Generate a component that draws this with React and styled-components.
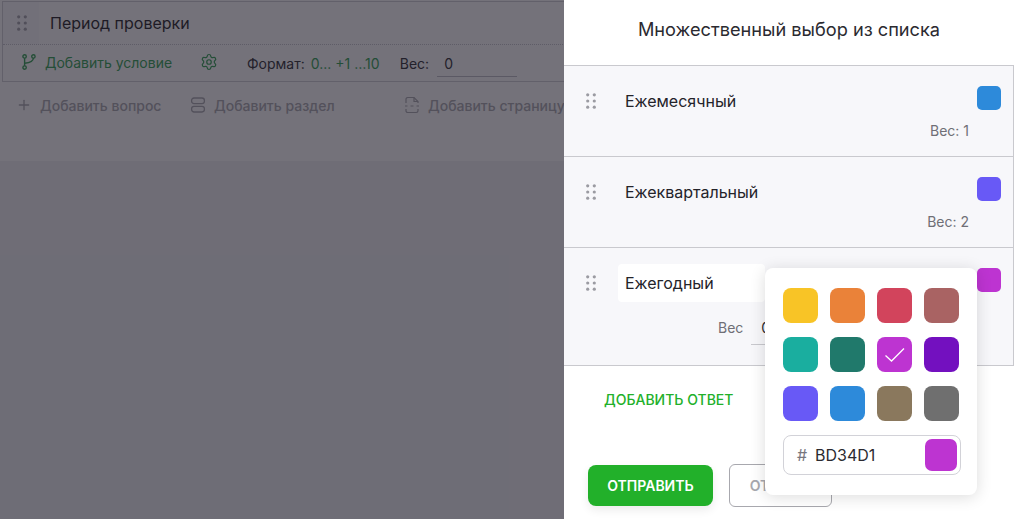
import styled, { createGlobalStyle } from "styled-components";
import { Plus, Settings } from "lucide-react";

const GlobalStyle = createGlobalStyle`
  html, body {
    margin: 0;
    height: 100%;
    overflow: hidden;
  }
  body {
    font-family: "Inter", "Liberation Sans", sans-serif;
    color: #2b2a30;
  }
`;

const answers = [
  { id: 1, title: "Ежемесячный", color: "#2d8ada", weight: 1 },
  { id: 2, title: "Ежеквартальный", color: "#6859f6", weight: 2 },
];

const palette = [
  "#f8c426",
  "#ea8239",
  "#d2445c",
  "#a96363",
  "#1aae9f",
  "#20796b",
  "#bd34d1",
  "#7310bf",
  "#6859f6",
  "#2d8ada",
  "#8a785d",
  "#6f6f6f",
];

const DragDots = () => (
  <svg width="10" height="16" viewBox="0 0 10 16" fill="currentColor">
    <circle cx="1.7" cy="1.8" r="1.6" />
    <circle cx="8.3" cy="1.8" r="1.6" />
    <circle cx="1.7" cy="8" r="1.6" />
    <circle cx="8.3" cy="8" r="1.6" />
    <circle cx="1.7" cy="14.2" r="1.6" />
    <circle cx="8.3" cy="14.2" r="1.6" />
  </svg>
);

const BranchIcon = () => (
  <svg width="14" height="16" viewBox="0 0 14 16" fill="none" stroke="currentColor" strokeWidth="1.4">
    <circle cx="2.6" cy="2.4" r="1.7" />
    <circle cx="2.6" cy="13.6" r="1.7" />
    <circle cx="11.4" cy="2.4" r="1.7" />
    <path d="M2.6 4.1v7.8" />
    <path d="M11.4 4.1c0 3.4-3.4 4.6-8.8 5.2" />
  </svg>
);

const SectionIcon = () => (
  <svg width="16" height="16" viewBox="0 0 16 16" fill="none" stroke="currentColor" strokeWidth="1.3">
    <rect x="1.6" y="1" width="12.8" height="5.6" rx="2.4" />
    <rect x="1.6" y="9.4" width="12.8" height="5.6" rx="2.4" />
  </svg>
);

const PageIcon = () => (
  <svg width="16" height="18" viewBox="0 0 16 18" fill="none" stroke="currentColor" strokeWidth="1.2">
    <path d="M2 7V3.2A1.7 1.7 0 0 1 3.7 1.5H10l4 4V7" />
    <path d="M10 1.5v4h4" />
    <path d="M1 10h2.5M6.5 10h3M12.5 10H15" />
    <path d="M2 13v1.8a1.7 1.7 0 0 0 1.7 1.7h8.6a1.7 1.7 0 0 0 1.7-1.7V13" />
  </svg>
);

const Page = styled.div`
  display: flex;
  width: 1014px;
  height: 519px;
  overflow: hidden;
  position: relative;
`;

const Backdrop = styled.div`
  position: absolute;
  inset: 0 450px 0 0;
  background: rgba(30, 28, 40, 0.62);
`;

const Editor = styled.section`
  width: 564px;
  flex: none;
  background: #f1f1f5;
  overflow: hidden;
`;

const EditorTop = styled.div`
  height: 161px;
  padding: 1px 0 0 2px;
  box-sizing: border-box;
  background: #ffffff;
`;

const QuestionCard = styled.div`
  width: 600px;
  border: 1px solid #cfcfd6;
  box-sizing: border-box;
`;

const QuestionHead = styled.div`
  display: flex;
  align-items: center;
  height: 42px;
  border-bottom: 1px dotted #c4c4cc;
`;

const Handle = styled.div`
  width: 36px;
  height: 100%;
  padding-left: 1px;
  box-sizing: border-box;
  display: flex;
  align-items: center;
  justify-content: center;
  background: #fafafc;
  color: #a3a3aa;
`;

const QuestionTitle = styled.div`
  margin-left: 11px;
  font-size: 16px;
  color: #1d1b22;
`;

const QuestionMeta = styled.div`
  display: flex;
  align-items: center;
  height: 36px;
  padding-left: 19px;
  font-size: 14px;
`;

const ConditionLink = styled.span`
  display: flex;
  align-items: center;
  gap: 9px;
  width: 178px;
  margin-bottom: 2px;
  color: #2ea050;
`;

const GearButton = styled.span`
  display: flex;
  width: 47px;
  margin-bottom: 2px;
  color: #2ea050;
`;

const MetaLabel = styled.span`
  color: #2b2a30;
`;

const FormatValue = styled.span`
  margin-left: 6px;
  width: 89px;
  color: #2ea050;
  white-space: pre;
`;

const MetaInput = styled.span`
  width: 73px;
  margin: 5px 0 0 8px;
  padding: 0 0 4px 7px;
  border-bottom: 1px solid #bdbdc5;
  color: #2b2a30;
`;

const AddBar = styled.div`
  display: flex;
  align-items: center;
  height: 24px;
  margin-top: 11px;
  padding-left: 14px;
  white-space: nowrap;
`;

const AddAction = styled.span`
  display: flex;
  flex: none;
  align-items: center;
  gap: 8px;
  width: ${(p) => p.$width}px;
  font-size: 14px;
  font-weight: 500;
  color: #a8a8ae;
`;

const Drawer = styled.aside`
  position: relative;
  width: 450px;
  flex: none;
  background: #ffffff;
`;

const DrawerTitle = styled.h2`
  margin: 0;
  height: 65px;
  padding-top: 18px;
  box-sizing: border-box;
  font-size: 18.2px;
  line-height: 22px;
  font-weight: 400;
  text-align: center;
  color: #2b2a30;
`;

const AnswerList = styled.div`
  border-top: 1px solid #c9c9ce;
  border-right: 1px solid #c9c9ce;
`;

const AnswerRow = styled.div`
  position: relative;
  height: ${(p) => p.$height}px;
  box-sizing: border-box;
  background: #f7f7fa;
  border-bottom: 1px solid #c9c9ce;
  padding: 20px 12px 0 22px;
`;

const AnswerMain = styled.div`
  display: flex;
  align-items: center;
  height: 30px;
`;

const RowHandle = styled.div`
  display: flex;
  width: 32px;
  color: #9b9ba2;
`;

const AnswerTitle = styled.div`
  flex: 1;
  font-size: 16px;
  padding-left: 7px;
  color: #24232a;
`;

const AnswerTitleInput = styled.div`
  flex: 1;
  height: 38px;
  line-height: 38px;
  margin-right: 212px;
  padding-left: 7px;
  border-radius: 4px;
  font-size: 16px;
  color: #24232a;
  background: #ffffff;
`;

const ColorChip = styled.div`
  align-self: flex-start;
  width: 24px;
  height: 24px;
  flex: none;
  border-radius: 5px;
  background: ${(p) => p.$color};
`;

const WeightText = styled.div`
  margin: 6px 32px 0 0;
  text-align: right;
  font-size: 14px;
  line-height: 17px;
  color: #6f6f76;
`;

const WeightEdit = styled.div`
  display: flex;
  align-items: flex-start;
  margin: 21px 0 0 132px;
  font-size: 14px;
  color: #6f6f76;
`;

const WeightField = styled.div`
  width: 80px;
  height: 26px;
  margin-left: 8px;
  padding-left: 10px;
  box-sizing: border-box;
  border-bottom: 1px solid #c9c9ce;
  color: #2b2a30;
`;

const AddAnswer = styled.div`
  margin: 25px 0 0 40px;
  font-size: 14px;
  line-height: 18px;
  font-weight: 500;
  color: #22b02a;
`;

const Actions = styled.div`
  display: flex;
  align-items: center;
  gap: 16px;
  margin: 55px 0 0 24px;
`;

const Button = styled.div`
  display: flex;
  align-items: center;
  justify-content: center;
  box-sizing: border-box;
  font-size: 14px;
  font-weight: 600;
  border-radius: 8px;
  width: 125px;
  height: 41px;
  color: #ffffff;
  background: #22b02a;
  box-shadow: 0 4px 10px rgba(0, 0, 0, 0.08);
`;

const GhostButton = styled(Button)`
  width: 103px;
  height: 43px;
  border-radius: 6px;
  border: 1px solid #a8a8ae;
  background: #ffffff;
  color: #a8a8ae;
  box-shadow: none;
`;

const ColorPopup = styled.div`
  position: absolute;
  top: 268px;
  left: 201px;
  width: 212px;
  height: 227px;
  padding: 20px 18px;
  box-sizing: border-box;
  background: #ffffff;
  border-radius: 8px;
  box-shadow: 0 2px 16px rgba(0, 0, 0, 0.14);
`;

const Swatches = styled.div`
  display: grid;
  grid-template-columns: repeat(4, 35px);
  grid-auto-rows: 35px;
  column-gap: 12px;
  row-gap: 14px;
`;

const Swatch = styled.div`
  display: flex;
  align-items: center;
  justify-content: center;
  border-radius: 8px;
  background: ${(p) => p.$color};
`;

const HexField = styled.div`
  display: flex;
  align-items: center;
  width: 178px;
  height: 40px;
  margin-top: 14px;
  padding: 0 3px 0 13px;
  box-sizing: border-box;
  border: 1px solid #d2d2d8;
  border-radius: 8px;
  font-size: 16px;
`;

const Hash = styled.span`
  width: 18px;
  color: #77777e;
`;

const HexValue = styled.span`
  flex: 1;
  color: #2b2a30;
`;

const HexPreview = styled.div`
  width: 32px;
  height: 32px;
  border-radius: 7px;
  background: ${(p) => p.$color};
`;

export default function App() {
  return (
    <Page>
      <GlobalStyle />
      <Editor>
        <EditorTop>
          <QuestionCard>
            <QuestionHead>
              <Handle>
                <DragDots />
              </Handle>
              <QuestionTitle>Период проверки</QuestionTitle>
            </QuestionHead>
            <QuestionMeta>
              <ConditionLink>
                <BranchIcon />
                Добавить условие
              </ConditionLink>
              <GearButton>
                <Settings size={18} strokeWidth={1.6} />
              </GearButton>
              <MetaLabel>Формат:</MetaLabel>
              <FormatValue>0... +1 …10</FormatValue>
              <MetaLabel>Вес:</MetaLabel>
              <MetaInput>0</MetaInput>
            </QuestionMeta>
          </QuestionCard>
          <AddBar>
            <AddAction $width={174}>
              <Plus size={16} />
              Добавить вопрос
            </AddAction>
            <AddAction $width={214}>
              <SectionIcon />
              Добавить раздел
            </AddAction>
            <AddAction $width={180}>
              <PageIcon />
              Добавить страницу
            </AddAction>
          </AddBar>
        </EditorTop>
      </Editor>
      <Backdrop />
      <Drawer>
        <DrawerTitle>Множественный выбор из списка</DrawerTitle>
        <AnswerList>
          {answers.map((answer) => (
            <AnswerRow key={answer.id} $height={91}>
              <AnswerMain>
                <RowHandle>
                  <DragDots />
                </RowHandle>
                <AnswerTitle>{answer.title}</AnswerTitle>
                <ColorChip $color={answer.color} />
              </AnswerMain>
              <WeightText>Вес: {answer.weight}</WeightText>
            </AnswerRow>
          ))}
          <AnswerRow $height={118}>
            <AnswerMain>
              <RowHandle>
                <DragDots />
              </RowHandle>
              <AnswerTitleInput>Ежегодный</AnswerTitleInput>
              <ColorChip $color="#bd34d1" />
            </AnswerMain>
            <WeightEdit>
              Вес
              <WeightField>0</WeightField>
            </WeightEdit>
          </AnswerRow>
        </AnswerList>
        <AddAnswer>ДОБАВИТЬ ОТВЕТ</AddAnswer>
        <Actions>
          <Button>ОТПРАВИТЬ</Button>
          <GhostButton>ОТМЕНА</GhostButton>
        </Actions>
        <ColorPopup>
          <Swatches>
            {palette.map((color) => (
              <Swatch key={color} $color={color}>
                {color === "#bd34d1" && (
                  <svg width="22" height="16" viewBox="0 0 22 16" fill="none" stroke="#fff" strokeWidth="1.3">
                    <path d="M1.5 8.5 7.5 14 20 1.5" />
                  </svg>
                )}
              </Swatch>
            ))}
          </Swatches>
          <HexField>
            <Hash>#</Hash>
            <HexValue>BD34D1</HexValue>
            <HexPreview $color="#bd34d1" />
          </HexField>
        </ColorPopup>
      </Drawer>
    </Page>
  );
}
